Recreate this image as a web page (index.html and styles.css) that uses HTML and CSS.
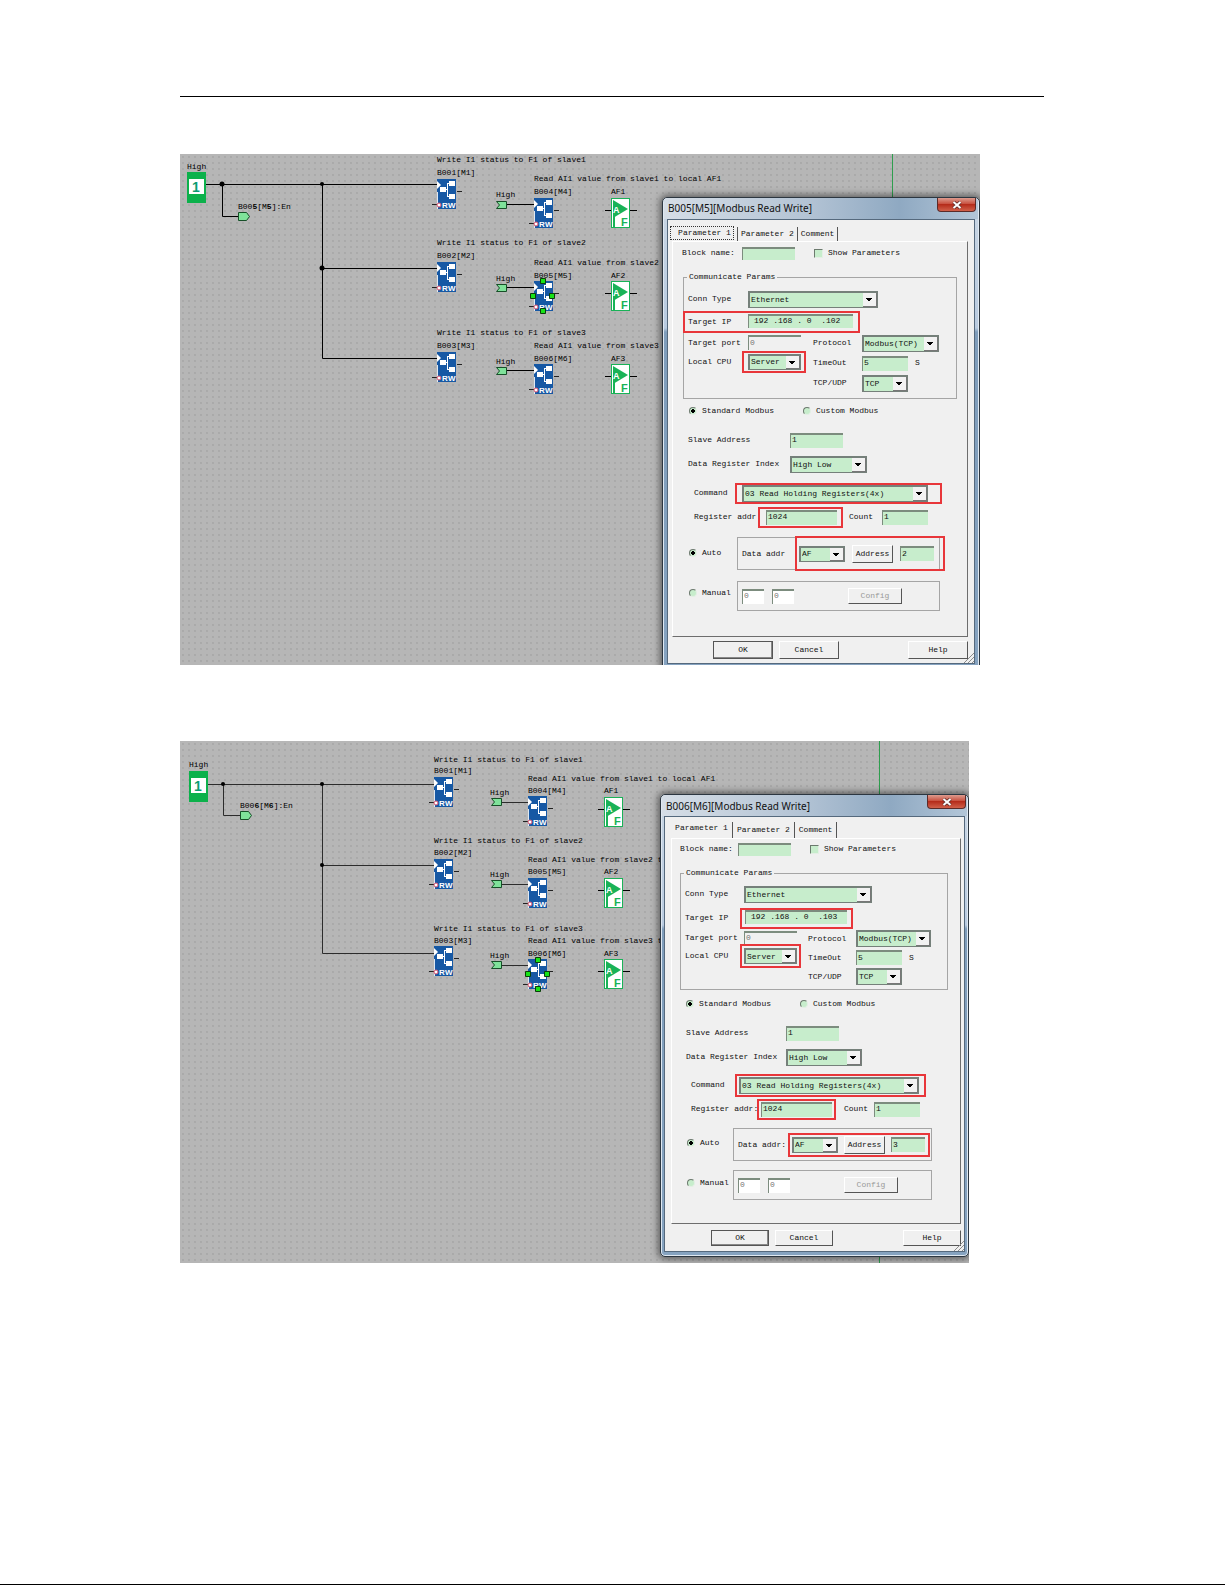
FILE: index.html
```html
<!DOCTYPE html>
<html lang="en">
<head>
<meta charset="utf-8">
<title>Modbus Read Write configuration</title>
<link rel="stylesheet" href="styles.css">
</head>
<body>
<svg class="defs" width="0" height="0" aria-hidden="true">
  <symbol id="modbus" viewBox="0 0 32 31" overflow="visible">
    <path d="M20 12.500h5M-5 25.500h6" class="stub"/>
    <rect width="19" height="30" fill="#1658a4"/>
    <path d="M0 2l4 4-4 4z" fill="#fff"/>
    <path d="M.5 13v17" stroke="#dfe8f2"/>
    <path d="M10.500 4v14M8 10.500h2M10 4.500h2M10 17.500h2" stroke="#fff" fill="none"/>
    <path d="M3 8h6v5h-6zM12 2h6v5h-6zM12 15h6v5h-6z" fill="#fff"/>
    <circle cx="2" cy="26" r="2" fill="#fff" stroke="#d8506c"/>
    <text x="5" y="29" class="rw">R</text><text x="11" y="29" class="rw">W</text>
  </symbol>
  <symbol id="af" viewBox="0 0 32 31" overflow="visible">
    <path d="M-6 12.500h6M19 12.500h7" class="stub thick"/>
    <rect x=".5" y=".5" width="18" height="29" fill="#fff" stroke="#19b257"/>
    <path d="M2 2l15 9-15 9z" fill="#19b257"/>
    <path d="M3 17v12" stroke="#19b257" stroke-width="2"/>
    <text x="2" y="15" class="af-a">A</text><text x="10" y="28" class="af-f">F</text>
  </symbol>
  <symbol id="pin" viewBox="0 0 12 8" overflow="visible">
    <path d="M.5.5h10v7h-10l3-3.500z" fill="#7fe29a" stroke="#174f28"/>
  </symbol>
  <symbol id="out" viewBox="0 0 12 9" overflow="visible">
    <path d="M.5.5h8l3 4-3 4h-8z" fill="#7fe29a" stroke="#174f28"/>
  </symbol>
  <symbol id="one" viewBox="0 0 20 31">
    <rect width="19" height="31" fill="#0cb14b"/>
    <rect x="2" y="7" width="15" height="15" fill="#fff"/>
    <text x="5" y="20" class="one">1</text>
  </symbol>
</svg>

<main class="page">
  <hr class="rule">

  <figure class="shot shot-a">
    <svg class="canvas" width="800" height="511" viewBox="0 0 800 511">
      <path d="M712.500 0v511" class="guide"/>
      <path d="M26 30.500H257M42.500 30v32.500H58M142.500 30v174.500H257M142.500 114.500H257M327 50.500h27M327 133.500h27M327 216.500h27" class="wire"/>
      <circle cx="42" cy="30" r="2.500"/><circle cx="142" cy="30" r="2"/><circle cx="142" cy="114" r="2.500"/>
      <text x="7" y="15">High</text><use href="#one" x="7" y="18" width="20" height="31"/>
      <text x="58" y="55">B00<tspan class="b">5</tspan>[M<tspan class="b">5</tspan>]:En</text><use href="#out" x="58" y="58" width="12" height="9"/>

      <text x="257" y="8">Write I1 status to F1 of slave1</text><text x="257" y="21">B001[M1]</text><use href="#modbus" x="257" y="25" width="32" height="31"/>
      <text x="257" y="91">Write I1 status to F1 of slave2</text><text x="257" y="104">B002[M2]</text><use href="#modbus" x="257" y="108" width="32" height="31"/>
      <text x="257" y="181">Write I1 status to F1 of slave3</text><text x="257" y="194">B003[M3]</text><use href="#modbus" x="257" y="198" width="32" height="31"/>

      <text x="354" y="27">Read AI1 value from slave1 to local AF1</text><text x="354" y="40">B004[M4]</text><use href="#modbus" x="354" y="44" width="32" height="31"/>
      <text x="354" y="111">Read AI1 value from slave2</text><text x="354" y="124">B005[M5]</text><use href="#modbus" x="354" y="127" width="32" height="31"/>
      <text x="354" y="194">Read AI1 value from slave3</text><text x="354" y="207">B006[M6]</text><use href="#modbus" x="354" y="210" width="32" height="31"/>

      <text x="316" y="43">High</text><use href="#pin" x="316" y="47" width="12" height="8"/>
      <text x="316" y="127">High</text><use href="#pin" x="316" y="130" width="12" height="8"/>
      <text x="316" y="210">High</text><use href="#pin" x="316" y="213" width="12" height="8"/>

      <text x="431" y="40">AF1</text><use href="#af" x="431" y="44" width="32" height="31"/>
      <text x="431" y="124">AF2</text><use href="#af" x="431" y="127" width="32" height="31"/>
      <text x="431" y="207">AF3</text><use href="#af" x="431" y="210" width="32" height="31"/>
      <path d="M360.500 124.500h5v5h-5zM350.500 139.500h5v5h-5zM369.500 139.500h5v5h-5zM360.500 154.500h5v5h-5z" class="handle"/>
    </svg>

    <form class="dialog">
      <header class="title"><h2>B005[M5][Modbus Read Write]</h2><button type="button" class="close" aria-label="Close"><svg width="10" height="8" viewBox="0 0 10 8"><path d="M1.500 1l7 6M8.500 1l-7 6" stroke="#5c2a26" stroke-width="3.500"/><path d="M1.500 1l7 6M8.500 1l-7 6" stroke="#fff" stroke-width="2"/></svg></button></header>
      <div class="client">
        <nav class="tabs"><button type="button" class="tab active focus">Parameter 1</button><button type="button" class="tab">Parameter 2</button><button type="button" class="tab">Comment</button></nav>
        <section class="panel">
          <div class="row name"><label for="a-name">Block name:</label><input id="a-name" class="field"><label class="check"><input type="checkbox">Show Parameters</label></div>
          <fieldset>
            <legend>Communicate Params</legend>
            <div class="pair"><label for="a-type">Conn Type</label><span class="combo wide"><select id="a-type"><option>Ethernet</option></select></span></div>
            <div class="pair ip mark"><label for="a-ip">Target IP</label><input id="a-ip" class="field" value="192 .168 . 0  .102"></div>
            <div class="cols">
              <div class="left">
                <div class="pair"><label for="a-port">Target port</label><input id="a-port" class="field off" value="0" readonly></div>
                <div class="pair"><label for="a-cpu">Local CPU</label><span class="mark cpu"><span class="combo"><select id="a-cpu"><option>Server</option></select></span></span></div>
              </div>
              <div class="right">
                <div class="pair"><label for="a-proto">Protocol</label><span class="combo proto"><select id="a-proto"><option>Modbus(TCP)</option></select></span></div>
                <div class="pair"><label for="a-time">TimeOut</label><input id="a-time" class="field short" value="5"><span>S</span></div>
                <div class="pair"><label for="a-tcp">TCP/UDP</label><span class="combo short"><select id="a-tcp"><option>TCP</option></select></span></div>
              </div>
            </div>
          </fieldset>
          <div class="row kind"><label><input type="radio" name="a-kind" checked>Standard Modbus</label><label><input type="radio" name="a-kind">Custom Modbus</label></div>
          <div class="row slave"><label for="a-slave">Slave Address</label><input id="a-slave" class="field" value="1"></div>
          <div class="row index"><label for="a-index">Data Register Index</label><span class="combo"><select id="a-index"><option>High Low</option></select></span></div>
          <div class="row command"><label for="a-cmd">Command</label><span class="mark"><span class="combo"><select id="a-cmd"><option>03 Read Holding Registers(4x)</option></select></span></span></div>
          <div class="row register"><label for="a-reg">Register addr</label><span class="mark"><input id="a-reg" class="field" value="1024"></span><label for="a-count">Count</label><input id="a-count" class="field short" value="1"></div>
          <div class="row auto"><label class="mode"><input type="radio" name="a-mode" checked>Auto</label><div class="box"><label for="a-area">Data addr</label><span class="mark"><span class="combo"><select id="a-area"><option>AF</option></select></span><button type="button" class="push">Address</button><input class="field" aria-label="Address" value="2"></span></div></div>
          <div class="row manual"><label class="mode"><input type="radio" name="a-mode">Manual</label><div class="box"><input class="field white" aria-label="Manual area" value="0"><input class="field white" aria-label="Manual address" value="0"><button type="button" class="push" disabled>Config</button></div></div>
        </section>
        <footer class="actions"><button type="button" class="push default">OK</button><button type="button" class="push">Cancel</button><button type="button" class="push help">Help</button></footer>
        <svg class="grip" width="10" height="10" viewBox="0 0 10 10"><path d="M0 10l10-10M4 10l6-6M8 10l2-2" stroke="#8b8b8b"/></svg>
      </div>
    </form>
  </figure>

  <figure class="shot shot-b">
    <svg class="canvas" width="789" height="522" viewBox="0 0 789 522">
      <path d="M699.500 0v522" class="guide"/>
      <path d="M28 43.500H254M43.500 43v31.500H60M142.500 43v169.500H254M142.500 124.500H254M322 61.500h26M322 143.500h26M322 224.500h26" class="wire soft"/>
      <circle cx="43" cy="43" r="2"/><circle cx="142" cy="43" r="2"/><circle cx="142" cy="124" r="2"/>
      <text x="9" y="26">High</text><use href="#one" x="9" y="30" width="20" height="31"/>
      <text x="60" y="67">B00<tspan class="b">6</tspan>[M<tspan class="b">6</tspan>]:En</text><use href="#out" x="60" y="70" width="12" height="9"/>

      <text x="254" y="21">Write I1 status to F1 of slave1</text><text x="254" y="32">B001[M1]</text><use href="#modbus" x="254" y="36" width="32" height="31"/>
      <text x="254" y="102">Write I1 status to F1 of slave2</text><text x="254" y="114">B002[M2]</text><use href="#modbus" x="254" y="118" width="32" height="31"/>
      <text x="254" y="190">Write I1 status to F1 of slave3</text><text x="254" y="202">B003[M3]</text><use href="#modbus" x="254" y="205" width="32" height="31"/>

      <text x="348" y="40">Read AI1 value from slave1 to local AF1</text><text x="348" y="52">B004[M4]</text><use href="#modbus" x="348" y="55" width="32" height="31"/>
      <text x="348" y="121">Read AI1 value from slave2 t</text><text x="348" y="133">B005[M5]</text><use href="#modbus" x="348" y="137" width="32" height="31"/>
      <text x="348" y="202">Read AI1 value from slave3 t</text><text x="348" y="215">B006[M6]</text><use href="#modbus" x="348" y="218" width="32" height="31"/>

      <text x="310" y="54">High</text><use href="#pin" x="311" y="57" width="12" height="8"/>
      <text x="310" y="136">High</text><use href="#pin" x="311" y="139" width="12" height="8"/>
      <text x="310" y="217">High</text><use href="#pin" x="311" y="220" width="12" height="8"/>

      <text x="424" y="52">AF1</text><use href="#af" x="424" y="56" width="32" height="31"/>
      <text x="424" y="133">AF2</text><use href="#af" x="424" y="137" width="32" height="31"/>
      <text x="424" y="215">AF3</text><use href="#af" x="424" y="218" width="32" height="31"/>
      <path d="M355.500 216.500h5v5h-5zM345.500 230.500h5v5h-5zM364.500 230.500h5v5h-5zM355.500 245.500h5v5h-5z" class="handle"/>
    </svg>

    <form class="dialog compact">
      <header class="title"><h2>B006[M6][Modbus Read Write]</h2><button type="button" class="close" aria-label="Close"><svg width="10" height="8" viewBox="0 0 10 8"><path d="M1.500 1l7 6M8.500 1l-7 6" stroke="#5c2a26" stroke-width="3.500"/><path d="M1.500 1l7 6M8.500 1l-7 6" stroke="#fff" stroke-width="2"/></svg></button></header>
      <div class="client">
        <nav class="tabs"><button type="button" class="tab active">Parameter 1</button><button type="button" class="tab">Parameter 2</button><button type="button" class="tab">Comment</button></nav>
        <section class="panel">
          <div class="row name"><label for="b-name">Block name:</label><input id="b-name" class="field"><label class="check"><input type="checkbox">Show Parameters</label></div>
          <fieldset>
            <legend>Communicate Params</legend>
            <div class="pair"><label for="b-type">Conn Type</label><span class="combo wide"><select id="b-type"><option>Ethernet</option></select></span></div>
            <div class="pair ip"><label for="b-ip">Target IP</label><span class="mark"><input id="b-ip" class="field" value="192 .168 . 0  .103"></span></div>
            <div class="cols">
              <div class="left">
                <div class="pair"><label for="b-port">Target port</label><input id="b-port" class="field off" value="0" readonly></div>
                <div class="pair"><label for="b-cpu">Local CPU</label><span class="mark cpu"><span class="combo"><select id="b-cpu"><option>Server</option></select></span></span></div>
              </div>
              <div class="right">
                <div class="pair"><label for="b-proto">Protocol</label><span class="combo proto"><select id="b-proto"><option>Modbus(TCP)</option></select></span></div>
                <div class="pair"><label for="b-time">TimeOut</label><input id="b-time" class="field short" value="5"><span>S</span></div>
                <div class="pair"><label for="b-tcp">TCP/UDP</label><span class="combo short"><select id="b-tcp"><option>TCP</option></select></span></div>
              </div>
            </div>
          </fieldset>
          <div class="row kind"><label><input type="radio" name="b-kind" checked>Standard Modbus</label><label><input type="radio" name="b-kind">Custom Modbus</label></div>
          <div class="row slave"><label for="b-slave">Slave Address</label><input id="b-slave" class="field" value="1"></div>
          <div class="row index"><label for="b-index">Data Register Index</label><span class="combo"><select id="b-index"><option>High Low</option></select></span></div>
          <div class="row command"><label for="b-cmd">Command</label><span class="mark"><span class="combo"><select id="b-cmd"><option>03 Read Holding Registers(4x)</option></select></span></span></div>
          <div class="row register"><label for="b-reg">Register addr:</label><span class="mark"><input id="b-reg" class="field" value="1024"></span><label for="b-count">Count</label><input id="b-count" class="field short" value="1"></div>
          <div class="row auto"><label class="mode"><input type="radio" name="b-mode" checked>Auto</label><div class="box"><label for="b-area">Data addr:</label><span class="mark"><span class="combo"><select id="b-area"><option>AF</option></select></span><button type="button" class="push">Address</button><input class="field" aria-label="Address" value="3"></span></div></div>
          <div class="row manual"><label class="mode"><input type="radio" name="b-mode">Manual</label><div class="box"><input class="field white" aria-label="Manual area" value="0"><input class="field white" aria-label="Manual address" value="0"><button type="button" class="push" disabled>Config</button></div></div>
        </section>
        <footer class="actions"><button type="button" class="push default">OK</button><button type="button" class="push">Cancel</button><button type="button" class="push help">Help</button></footer>
        <svg class="grip" width="10" height="10" viewBox="0 0 10 10"><path d="M0 10l10-10M4 10l6-6M8 10l2-2" stroke="#8b8b8b"/></svg>
      </div>
    </form>
  </figure>
</main>
</body>
</html>
```
FILE: styles.css
```css
* { box-sizing: border-box; }

body {
  margin: 0;
  min-height: 100vh;
  background: #fff;
  border-bottom: 1px solid #000;
  font: 8px/10px "Liberation Mono", "DejaVu Sans Mono", monospace;
  color: #111;
}

.defs { display: none; }
.page { padding: 96px 181px 0 180px; }
.rule { margin: 0; border: 0; border-top: 1px solid #000; }

/* Diagram canvas */
.shot {
  position: relative;
  width: fit-content;
  margin: 57px 0 0;
  overflow: hidden;
  background-color: #b6b6b6;
  background-image: radial-gradient(circle at 3px 3px, #8c8c8c 0, #b6b6b6 1px, transparent 1px);
  background-size: 6px 6px;
}
.shot-b { margin-top: 76px; }
.canvas { display: block; font-size: 8px; white-space: pre; }
.wire { fill: none; stroke: #000; }
.wire.soft { stroke: #2c2c2c; }
.stub { stroke: #222; fill: none; }
.stub.thick { stroke: #000; }
.guide { stroke: #2e9e4e; }
.handle { fill: #17e217; stroke: #0a3d0a; }
.b { font-weight: bold; }
.rw { font: bold 8px "Liberation Sans", sans-serif; fill: #fff; }
.af-a { font: bold 9px "Liberation Sans", sans-serif; fill: #fff; }
.af-f { font: bold 11px "Liberation Sans", sans-serif; fill: #19b257; }
.one { font: bold 14px "Liberation Sans", sans-serif; fill: #0d9c72; }

/* Dialog window floating over the canvas */
.dialog {
  --label: 60px;
  --control: 65px;
  --second: 49px;
  --wide: 130px;
  --proto: 77px;
  position: absolute;
  left: 482px;
  top: 43px;
  width: 318px;
  height: 474px;
  display: flex;
  flex-direction: column;
  padding: 0 4px 6px;
  border: 1px solid #2c3640;
  border-radius: 5px;
  background: linear-gradient(#c9d6e4, #b9cbe0 130px, #7f9dbb 134px, #86a3c0);
  box-shadow: 0 0 7px 2px rgba(0, 0, 0, .5), inset 0 0 0 1px #dfe8f1;
}
.title {
  display: flex;
  justify-content: space-between;
  align-items: flex-start;
  height: 21px;
  margin: 0 -3px;
  padding-left: 4px;
  flex: none;
  background: linear-gradient(90deg, #d5dde6, #b4c4d5 45%, #8fa9c2 75%, #b3c6d8);
  border-radius: 4px 4px 0 0;
}
.title h2 { margin: 3px 0 0; font: 10px/14px "Noto Sans", "Open Sans", sans-serif; }
.close {
  display: grid;
  place-items: center;
  width: 39px;
  height: 14px;
  margin-right: 2px;
  padding: 0;
  border: 1px solid #5b2b29;
  border-top: 0;
  border-radius: 0 0 4px 4px;
  background: linear-gradient(#dd9c8f, #c8503f 45%, #b52c1b 50%, #d0604a);
}
.client {
  position: relative;
  flex: 1;
  display: flex;
  flex-direction: column;
  padding: 7px 6px 0 4px;
  border: 1px solid #55697d;
  background: #f0f0f0;
}
.grip { position: absolute; right: 0; bottom: 0; }

.tabs { display: flex; height: 14px; flex: none; align-items: stretch; }
.tab {
  padding: 0 3px;
  border: 0;
  border-right: 1px solid #555;
  background: none;
  font: inherit;
  color: inherit;
}
.tab.active { width: 66px; padding: 0 0 2px; }
.tab.focus::before {
  content: "";
  position: absolute;
  left: 2px;
  top: 6px;
  width: 62px;
  height: 12px;
  border: 1px dotted #333;
}

.panel {
  display: flex;
  flex-direction: column;
  flex: none;
  height: 396px;
  border: 1px solid #fff;
  border-right-color: #6d6d6d;
  border-bottom-color: #6d6d6d;
}
.row { display: flex; align-items: center; height: 24px; flex: none; white-space: nowrap; }
label { flex: none; white-space: nowrap; }

/* Controls */
.field {
  min-width: 0;
  height: 15px;
  padding: 0 1px 3px;
  border: 0;
  border-top: 2px solid #7c8c7e;
  border-left: 1px solid #7c8c7e;
  border-radius: 0;
  background: #c7edcc;
  font: inherit;
  color: inherit;
}
.field.off { background: #f0f0f0; color: #777; }
.field.white { background: #fff; color: #777; }
.combo { position: relative; display: block; height: 17px; flex: none; }
.combo select {
  appearance: none;
  display: block;
  width: 100%;
  height: 100%;
  padding: 0 1px;
  border: 1px solid #75807a;
  border-width: 2px 1px 1px 2px;
  border-radius: 0;
  background: #c7edcc;
  font: inherit;
  color: inherit;
}
.combo::after {
  content: "";
  position: absolute;
  right: 1px;
  top: 2px;
  bottom: 1px;
  width: 13px;
  border-right: 1px solid #777;
  border-bottom: 1px solid #777;
  background:
    linear-gradient(#000, #000) 3px 5px / 6px 1px no-repeat,
    linear-gradient(#000, #000) 4px 6px / 4px 1px no-repeat,
    linear-gradient(#000, #000) 5px 7px / 2px 1px no-repeat,
    #f2f2f2;
  pointer-events: none;
}
input[type="radio"], input[type="checkbox"] {
  appearance: none;
  width: 8px;
  height: 8px;
  margin: 0 5px 0 0;
  border: 1px solid #6c7a6e;
  border-right-color: #e4efe5;
  border-bottom-color: #e4efe5;
  background: #c7edcc;
  flex: none;
}
input[type="radio"] { border-radius: 50%; }
input[type="radio"]:checked { background: radial-gradient(#000 1px, #000 2px, #c7edcc 2px); }
input[type="checkbox"] { width: 9px; height: 9px; }
.check, .kind label, .mode { display: flex; align-items: center; }
.push {
  flex: none;
  padding: 0;
  height: 18px;
  border: 1px solid #fff;
  border-right-color: #555;
  border-bottom-color: #555;
  background: #f0f0f0;
  font: inherit;
  color: inherit;
}
.push:disabled { color: #999; }
.mark { display: flex; align-items: center; border: 2px solid #e8363a; flex: none; }

/* Panel rows */
.name { height: 22px; padding-left: 9px; }
.name > label:first-child { width: 60px; }
.name .field { width: 53px; height: 13px; }
.check { margin-left: 19px; }

fieldset {
  min-width: 0;
  height: 127px;
  margin: 8px 10px 0 10px;
  padding: 8px 0 0 4px;
  border: 1px solid #a5a5a5;
}
legend { height: 10px; margin-left: -1px; padding: 0 2px; }
.pair { display: flex; align-items: center; height: 18px; }
.pair > label { width: var(--label); }
.wide { width: var(--wide); }
.ip.mark { width: 177px; height: 22px; margin: 3px 0 0 -5px; padding-left: 3px; }
.ip .field { width: 105px; height: 14px; margin-bottom: 2px; padding-left: 5px; }
.cols { display: flex; }
.left { width: calc(var(--label) + var(--control)); flex: none; }
.left .pair { height: 19px; }
.left .field, .left .combo { width: 53px; }
.left .combo { height: 16px; }
.cpu { margin-left: -6px; padding: 1px 3px 1px 4px; }
.right .pair { height: 20px; }
.right .pair > label { width: var(--second); }
.proto { width: var(--proto); }
.right .short { width: 46px; margin-right: 7px; }

.kind { padding-left: 16px; }
.kind label:first-child { width: 114px; }
.slave, .index { padding-left: 15px; }
.slave { margin-top: 5px; }
.slave label, .index label { width: 102px; }
.slave .field { width: 53px; }
.index .combo { width: 77px; }
.command { margin-top: 5px; padding-left: 21px; }
.command label { width: 41px; }
.command .mark { width: 207px; height: 21px; padding-left: 5px; }
.command .combo { width: 186px; }
.register { height: 22px; margin-top: 1px; padding-left: 21px; }
.register label:first-child { width: 64px; }
.register .mark { width: 85px; height: 21px; padding-left: 6px; }
.register .mark .field { width: 71px; }
.register .mark + label { width: 33px; margin-left: 6px; }
.register .short { width: 46px; }
.mode { width: 48px; padding-bottom: 2px; }
.auto, .manual { padding-left: 16px; }
.auto { height: 33px; margin-top: 9px; }
.manual { height: 30px; margin-top: 11px; }
.manual .mode { padding-bottom: 6px; }
.box {
  display: flex;
  align-items: center;
  width: 203px;
  height: 100%;
  flex: none;
  padding-left: 4px;
  border: 1px solid #a5a5a5;
}
.auto .box label { width: 53px; }
.auto .mark { width: 150px; height: 35px; padding-left: 2px; gap: 7px; }
.auto .combo { width: 46px; height: 16px; }
.auto .push { width: 41px; }
.auto .field { width: 34px; }
.manual .field { width: 22px; }
.manual .field + .field { margin-left: 8px; }
.manual .push { width: 54px; height: 16px; margin-left: 54px; }

.actions { display: flex; gap: 6px; padding: 4px 0 0 41px; }
.actions .push { width: 60px; }
.actions .default { border-color: #555; box-shadow: inset -1px -1px #888; }
.actions .help { margin-left: auto; }

/* Slightly smaller window of the second figure */
.compact {
  --label: 59px;
  --control: 64px;
  --second: 48px;
  --wide: 128px;
  --proto: 75px;
  left: 480px;
  top: 53px;
  width: 309px;
  height: 463px;
  padding: 0 3px 4px;
}
.compact .title { margin: 0 -2px; }
.compact .title h2 { margin-top: 4px; }
.compact .close { margin-right: 1px; }
.compact .client { padding: 5px 3px 0 6px; }
.compact .tabs { height: 16px; }
.compact .tab { padding: 0 4px; }
.compact .tab.active { width: 62px; padding: 0 0 4px; }
.compact .panel { height: 386px; }
.compact .name { height: 20px; padding-left: 8px; }
.compact .name > label:first-child { width: 58px; }
.compact fieldset { height: 122px; margin: 9px 12px 0 8px; padding-top: 7px; }
.compact .ip { height: 22px; margin-top: 4px; }
.compact .ip .mark { width: 113px; height: 21px; margin-left: -4px; padding-left: 3px; }
.compact .ip .field { width: 102px; }
.compact .left .pair { height: 18px; }
.compact .right .pair { height: 19px; }
.compact .cpu { margin-left: -4px; padding: 2px; }
.compact .kind { margin-top: 2px; }
.compact .kind, .compact .slave, .compact .index { padding-left: 14px; }
.compact .slave { margin-top: 5px; }
.compact .slave label, .compact .index label { width: 100px; }
.compact .index .combo { width: 76px; }
.compact .command, .compact .register { padding-left: 19px; }
.compact .command { margin-top: 4px; }
.compact .command label { width: 44px; }
.compact .command .mark { width: 191px; height: 23px; padding-left: 2px; }
.compact .command .combo { width: 180px; }
.compact .register label:first-child { width: 66px; }
.compact .register .mark { width: 79px; padding-left: 2px; }
.compact .register .mark + label { width: 30px; margin-left: 8px; }
.compact .auto, .compact .manual { padding-left: 15px; }
.compact .mode { width: 46px; padding-bottom: 4px; }
.compact .auto { margin-top: 8px; }
.compact .manual { margin-top: 9px; }
.compact .box { width: 199px; }
.compact .auto .box label { width: 50px; }
.compact .auto .mark { width: 142px; height: 24px; gap: 6px; }
.compact .actions { padding: 6px 0 0 40px; }
.compact .actions .push { width: 58px; height: 16px; }
```
